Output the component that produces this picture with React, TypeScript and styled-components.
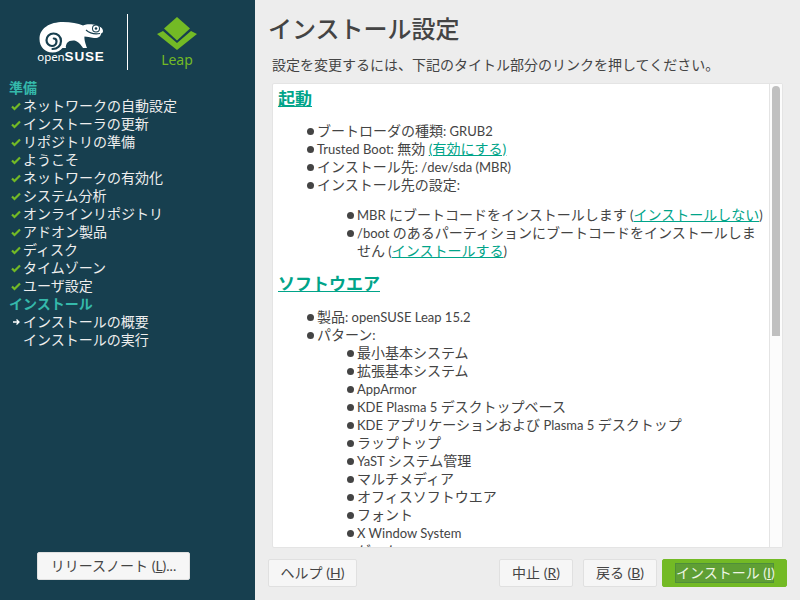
import React from "react";
import styled, { createGlobalStyle } from "styled-components";

const FONT = `Lato, "Noto Sans CJK JP", sans-serif`;

const Global = createGlobalStyle`
  html, body { margin: 0; padding: 0; width: 800px; height: 600px; overflow: hidden; }
  body { font-family: ${FONT}; }
  * { box-sizing: border-box; }
`;

const Page = styled.div`
  display: flex;
  width: 800px;
  height: 600px;
  background: #ededed;
`;

const Sidebar = styled.aside`
  width: 255px;
  flex: none;
  height: 600px;
  background: #173f4f;
  display: flex;
  flex-direction: column;
`;

const LogoBar = styled.div`
  height: 79px;
  flex: none;
  display: flex;
  align-items: flex-start;
  padding: 13px 0 0 36px;
`;

const LogoArt = styled.svg`
  display: block;
`;

const OpenSuseBlock = styled.div`
  width: 70px;
  display: flex;
  flex-direction: column;
  align-items: center;
`;

const OpenSuseWord = styled.div`
  font-family: "Noto Sans", sans-serif;
  color: #fff;
  font-size: 11.5px;
  line-height: 12px;
  margin-top: -2px;
  white-space: nowrap;
  letter-spacing: -0.1px;
`;

const SuseBold = styled.span`
  font-family: "Liberation Sans", sans-serif;
  font-weight: 700;
  font-size: 13.5px;
  letter-spacing: 0.85px;
`;

const Divider = styled.div`
  width: 1px;
  height: 56px;
  background: #fff;
  margin: 1px 29px 0 21px;
`;

const LeapBlock = styled.div`
  display: flex;
  flex-direction: column;
  align-items: center;
  padding-top: 4px;
  width: 40px;
`;

const LeapWord = styled.div`
  font-family: "Noto Sans", sans-serif;
  color: #73ba25;
  font-size: 14px;
  line-height: 18px;
  margin-top: 1px;
`;

const Steps = styled.ul`
  list-style: none;
  margin: 0;
  padding: 0 0 0 9px;
  flex: 1;
`;

const StepRow = styled.li<{ $heading?: boolean }>`
  display: flex;
  align-items: center;
  height: 18px;
  font-size: 14px;
  line-height: 18px;
  white-space: nowrap;
  color: ${(p) => (p.$heading ? "#35b9ab" : "#eeeeee")};
  font-weight: ${(p) => (p.$heading ? 700 : 400)};
`;

const StepMark = styled.span`
  width: 14px;
  flex: none;
  display: flex;
  align-items: center;
  padding-left: 1px;
`;

const SideFooter = styled.div`
  flex: none;
  display: flex;
  padding: 0 0 20px 37px;
`;

const Button = styled.button<{ $width: number; $primary?: boolean }>`
  width: ${(p) => p.$width}px;
  height: 28px;
  padding: 0;
  font-family: ${FONT};
  font-size: 14px;
  line-height: 18px;
  color: ${(p) => (p.$primary ? "#eef6e4" : "#444444")};
  background: ${(p) => (p.$primary ? "#73ba25" : "#f6f6f6")};
  border: 1px solid ${(p) => (p.$primary ? "#73ba25" : "#e0e0e0")};
  border-radius: 2px;
  display: flex;
  align-items: center;
  justify-content: center;
  white-space: nowrap;
`;

const FocusRing = styled.span`
  display: block;
  padding: 0;
  height: 20px;
  line-height: 18px;
  width: 99px;
  text-align: center;
  background: #5f9f34;
  border: 1px solid #4f8f3a;
`;

const Main = styled.main`
  flex: 1;
  min-width: 0;
  height: 600px;
  display: flex;
  flex-direction: column;
  padding: 0 13px 14px 13px;
`;

const Title = styled.h1`
  margin: 12px 0 0 0;
  font-size: 24px;
  line-height: 33px;
  font-weight: 500;
  color: #444444;
  font-family: ${FONT};
`;

const Intro = styled.p`
  margin: 10px 0 9px 4px;
  font-size: 14px;
  line-height: 19px;
  color: #444444;
`;

const Panel = styled.div`
  margin-left: 4px;
  height: 465px;
  width: 511px;
  flex: none;
  display: flex;
  background: #fff;
  border: 1px solid #e4e4e4;
  border-radius: 2px;
  overflow: hidden;
`;

const Rich = styled.div`
  flex: 1;
  min-width: 0;
  overflow: hidden;
  padding: 4px 6px 0 5px;
  color: #444444;
  font-size: 14px;
  line-height: 18px;
`;

const Track = styled.div`
  width: 13px;
  flex: none;
  background: #fcfcfc;
  border-left: 1px solid #e4e4e4;
  padding: 2px 2px 0 2px;
`;

const Thumb = styled.div`
  height: 250px;
  width: 8px;
  background: #c0c0c0;
  border-radius: 4px 4px 0 0;
`;

const SectionHead = styled.h2<{ $top: number }>`
  margin: ${(p) => p.$top}px 0 0 0;
  font-size: 17px;
  line-height: 22px;
  font-weight: 700;
`;

const HeadLink = styled.a`
  color: #00a489;
  text-decoration: underline;
`;

const Inline = styled.a`
  color: #00a489;
  text-decoration: underline;
`;

const Latin = styled.span`
  font-size: 13px;
  line-height: 1;
`;

const Bullets = styled.ul<{ $top: number; $indent: number }>`
  list-style: none;
  margin: ${(p) => p.$top}px 0 0 ${(p) => p.$indent}px;
  padding: 0;
`;

const Bullet = styled.li`
  position: relative;
  padding-left: 10px;
  &::before {
    content: "";
    position: absolute;
    left: 0;
    top: 6px;
    width: 7px;
    height: 7px;
    border-radius: 50%;
    background: #444444;
  }
`;

const FooterBar = styled.div`
  margin-top: 11px;
  display: flex;
  align-items: center;
  flex: none;
`;

const Spacer = styled.div`
  flex: 1;
`;

const Gap = styled.div<{ $w: number }>`
  width: ${(p) => p.$w}px;
  flex: none;
`;

const Key = styled.span`
  text-decoration: underline;
`;

const Check = () => (
  <svg width="11" height="10" viewBox="0 0 11 10">
    <path d="M2 5.500 L4.500 8 L10 2.500" fill="none" stroke="#73ba25" strokeWidth="2.200" />
  </svg>
);

const Arrow = () => (
  <svg width="11" height="10" viewBox="0 0 11 10">
    <path d="M3 5 H9 M6.500 2.500 L9 5 L6.500 7.500" fill="none" stroke="#ffffff" strokeWidth="1.300" />
  </svg>
);

const Chameleon = () => (
  <LogoArt width="70" height="40" viewBox="0 0 70 40">
    <path
      fill="#ffffff"
      d="M3.500 26 C3.500 15 14 9 27 9 C35 9 42 10.500 47 12.500 C50 11 54 11 57 11.500 C62 12 67 14.500 67 18 C67 19.500 66 20.500 65 20.500 C65 23.500 62 25.500 58 25 C54 24.500 51 23.500 48.500 23.500 C48 26 49.500 31 51 35 L47 35 C45 32 42.500 28.500 38.500 27.500 C35 27.300 32.500 28 31 30 C30 32 29.500 33.500 30 35 L26.500 35 C24.500 37.500 21 39.500 16.500 39.500 C9 39.500 3.500 34 3.500 26 Z"
    />
    <path
      d="M16.500 36 C21.500 36 25 32.500 25 28 C25 23.500 21.500 20.500 17.500 20.500 C13.500 20.500 10.500 23.500 10.500 27.300 C10.500 30.500 13 33 16 33 C18.500 33 20.500 31 20.500 28.500 C20.500 26.800 19.300 25.500 17.800 25.500"
      fill="none"
      stroke="#173f4f"
      strokeWidth="2.200"
      strokeLinecap="round"
    />
    <path d="M50 17 C54 20.500 59 21.500 64 20.500" fill="none" stroke="#173f4f" strokeWidth="1.100" />
    <circle cx="60" cy="15.500" r="4" fill="#173f4f" />
    <circle cx="60" cy="15.500" r="3" fill="#ffffff" />
    <circle cx="60" cy="15.500" r="1.300" fill="#173f4f" />
  </LogoArt>
);

const LeapMark = () => (
  <LogoArt width="40" height="33" viewBox="0 0 40 33">
    <path d="M20 0 L33 11.500 L20 23.500 L7 11.500 Z" fill="#73ba25" />
    <path d="M0 17 L6 14 L20 26 L34 14 L40 17 L20 33 Z" fill="#73ba25" />
  </LogoArt>
);

const prep = [
  "ネットワークの自動設定",
  "インストーラの更新",
  "リポジトリの準備",
  "ようこそ",
  "ネットワークの有効化",
  "システム分析",
  "オンラインリポジトリ",
  "アドオン製品",
  "ディスク",
  "タイムゾーン",
  "ユーザ設定",
];

const patterns: React.ReactNode[] = [
  "最小基本システム",
  "拡張基本システム",
  <Latin>AppArmor</Latin>,
  <>
    <Latin>KDE Plasma 5 </Latin>デスクトップベース
  </>,
  <>
    <Latin>KDE </Latin>アプリケーションおよび<Latin> Plasma 5 </Latin>デスクトップ
  </>,
  "ラップトップ",
  <>
    <Latin>YaST </Latin>システム管理
  </>,
  "マルチメディア",
  "オフィスソフトウエア",
  "フォント",
  <Latin>X Window System</Latin>,
  "ゲーム",
];

export default function App() {
  return (
    <Page>
      <Global />
      <Sidebar>
        <LogoBar>
          <OpenSuseBlock>
            <Chameleon />
            <OpenSuseWord>
              open<SuseBold>SUSE</SuseBold>
            </OpenSuseWord>
          </OpenSuseBlock>
          <Divider />
          <LeapBlock>
            <LeapMark />
            <LeapWord>Leap</LeapWord>
          </LeapBlock>
        </LogoBar>
        <Steps>
          <StepRow $heading>準備</StepRow>
          {prep.map((s) => (
            <StepRow key={s}>
              <StepMark>
                <Check />
              </StepMark>
              {s}
            </StepRow>
          ))}
          <StepRow $heading>インストール</StepRow>
          <StepRow>
            <StepMark>
              <Arrow />
            </StepMark>
            インストールの概要
          </StepRow>
          <StepRow>
            <StepMark />
            インストールの実行
          </StepRow>
        </Steps>
        <SideFooter>
          <Button $width={153}>
            リリースノート (<Key>L</Key>)...
          </Button>
        </SideFooter>
      </Sidebar>
      <Main>
        <Title>インストール設定</Title>
        <Intro>設定を変更するには、下記のタイトル部分のリンクを押してください。</Intro>
        <Panel>
          <Rich>
            <SectionHead $top={0}>
              <HeadLink>起動</HeadLink>
            </SectionHead>
            <Bullets $top={12} $indent={29}>
              <Bullet>
                ブートローダの種類<Latin>: GRUB2</Latin>
              </Bullet>
              <Bullet>
                <Latin>Trusted Boot: </Latin>無効 <Inline>(有効にする)</Inline>
              </Bullet>
              <Bullet>
                インストール先<Latin>: /dev/sda (MBR)</Latin>
              </Bullet>
              <Bullet>
                インストール先の設定<Latin>:</Latin>
              </Bullet>
            </Bullets>
            <Bullets $top={12} $indent={69}>
              <Bullet>
                <Latin>MBR </Latin>にブートコードをインストールします<Latin> (</Latin>
                <Inline>インストールしない</Inline>
                <Latin>)</Latin>
              </Bullet>
              <Bullet>
                <Latin>/boot </Latin>のあるパーティションにブートコードをインストールしません<Latin> (</Latin>
                <Inline>インストールする</Inline>
                <Latin>)</Latin>
              </Bullet>
            </Bullets>
            <SectionHead $top={13}>
              <HeadLink>ソフトウエア</HeadLink>
            </SectionHead>
            <Bullets $top={13} $indent={29}>
              <Bullet>
                製品<Latin>: openSUSE Leap 15.2</Latin>
              </Bullet>
              <Bullet>
                パターン<Latin>:</Latin>
              </Bullet>
            </Bullets>
            <Bullets $top={0} $indent={69}>
              {patterns.map((p, i) => (
                <Bullet key={i}>{p}</Bullet>
              ))}
            </Bullets>
          </Rich>
          <Track>
            <Thumb />
          </Track>
        </Panel>
        <FooterBar>
          <Button $width={89}>
            ヘルプ (<Key>H</Key>)
          </Button>
          <Spacer />
          <Button $width={74}>
            中止 (<Key>R</Key>)
          </Button>
          <Gap $w={10} />
          <Button $width={74}>
            戻る (<Key>B</Key>)
          </Button>
          <Gap $w={5} />
          <Button $width={125} $primary>
            <FocusRing>
              インストール (<Key>I</Key>)
            </FocusRing>
          </Button>
        </FooterBar>
      </Main>
    </Page>
  );
}
